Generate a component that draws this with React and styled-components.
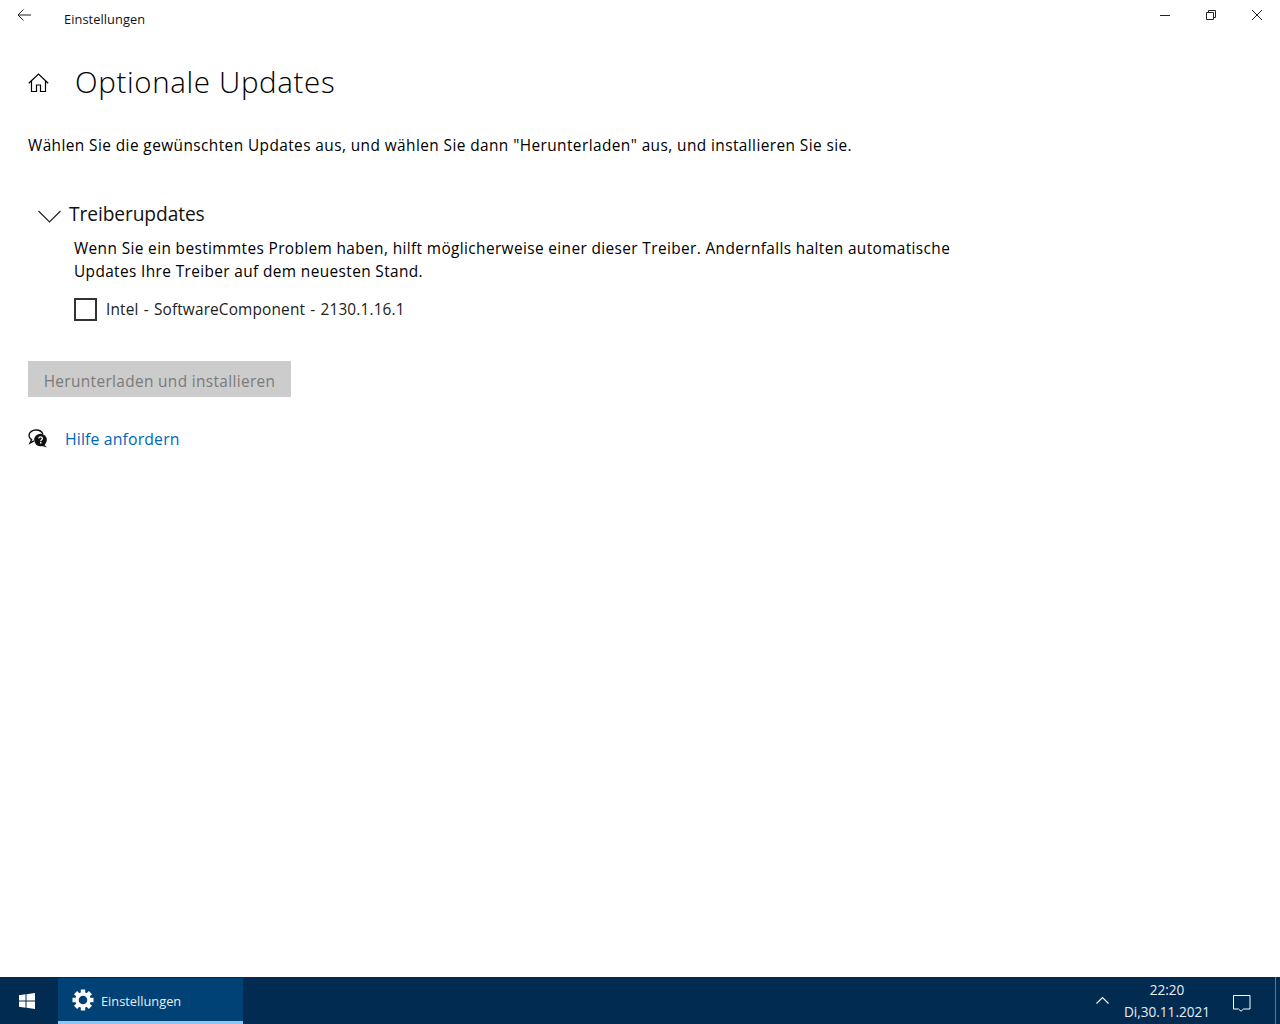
import React from "react";
import styled, { createGlobalStyle } from "styled-components";

const Global = createGlobalStyle`
  html, body { margin: 0; padding: 0; background: #fff; }
  body { font-family: "Open Sans", "Noto Sans", "Liberation Sans", sans-serif; color: #000; }
  #root { height: 1024px; overflow: hidden; }
`;

const Screen = styled.div`
  width: 1280px; height: 1024px; display: flex; flex-direction: column; overflow: hidden;
`;
const Window = styled.div`
  flex: 1; display: flex; flex-direction: column; background: #fff; min-height: 0;
`;
const TitleBar = styled.div`
  height: 32px; flex: none; display: flex; align-items: flex-start;
`;
const BackButton = styled.div`
  width: 48px; height: 30px; flex: none; display: flex; justify-content: center; padding-top: 9px; box-sizing: border-box;
`;
const AppName = styled.div`
  font-size: 12.8px; line-height: 16px; padding: 11px 0 0 16px; flex: 1; color: #111; letter-spacing: 0.07px;
`;
const WinControls = styled.div`
  display: flex;
`;
const WinButton = styled.div`
  width: 46px; height: 30px; display: flex; align-items: center; justify-content: center;
`;
const Content = styled.div`
  padding: 0 0 0 28px; display: flex; flex-direction: column; align-items: flex-start;
`;
const Header = styled.div`
  display: flex; align-items: center; margin-top: 21px; height: 58px;
`;
const HomeIcon = styled.div`
  width: 47px; flex: none; display: flex; align-items: center; padding-top: 2px;
`;
const PageTitle = styled.h1`
  margin: 0; font-weight: 300; font-size: 29.5px; line-height: 40px; letter-spacing: 0.65px; color: #000;
`;
const Intro = styled.p`
  margin: 23px 0 0; font-size: 15.4px; line-height: 24px; letter-spacing: 0.42px; color: #000;
`;
const SectionHead = styled.div`
  display: flex; align-items: center; margin: 41px 0 0 10px; height: 30px;
`;
const Chevron = styled.div`
  width: 31px; flex: none; display: flex; align-items: center; padding-top: 4px;
`;
const SectionTitle = styled.h2`
  margin: 0; font-weight: 400; font-size: 19.2px; line-height: 30px; letter-spacing: -0.1px; color: #111;
`;
const Body = styled.div`
  margin: 8px 0 0 46px; width: 890px;
`;
const Para = styled.p`
  margin: 0; font-size: 15.4px; line-height: 23px; letter-spacing: 0.38px;
`;
const CheckRow = styled.div`
  display: flex; align-items: center; margin-top: 15px; height: 23px;
`;
const CheckBox = styled.div`
  width: 23px; height: 23px; margin-top: -1px; box-sizing: border-box; border: 2px solid #333; background: #fff; flex: none;
`;
const CheckLabel = styled.span`
  margin-left: 9px; font-size: 15.4px; line-height: 23px; letter-spacing: 0.15px; word-spacing: 1px; color: #222;
`;
const DisabledButton = styled.div`
  margin-top: 40px; width: 263px; height: 36px; background: #ccc; color: #7a7a7a;
  font-size: 15.4px; letter-spacing: 0.35px; display: flex; align-items: center; justify-content: center; padding-top: 4px; box-sizing: border-box;
`;
const HelpRow = styled.div`
  display: flex; align-items: center; margin-top: 29px; height: 26px;
`;
const HelpIcon = styled.div`
  width: 37px; flex: none; display: flex; align-items: center; margin-top: -2px;
`;
const HelpLink = styled.a`
  color: #0067b8; font-size: 15.8px; letter-spacing: 0.15px; line-height: 26px; text-decoration: none;
`;
const Taskbar = styled.div`
  height: 47px; flex: none; background: #012b50; color: #fff; display: flex; align-items: stretch;
`;
const StartBtn = styled.div`
  width: 58px; flex: none; display: flex; align-items: center; justify-content: center; padding-right: 4px; box-sizing: border-box;
`;
const TaskApp = styled.div`
  width: 185px; flex: none; background: #004275; border-bottom: 3px solid #8ec5ee; box-sizing: border-box;
  display: flex; align-items: center; padding: 0 0 0 14px; margin-top: 1px; height: 46px;
`;
const TaskLabel = styled.span`
  margin-left: 7px; font-size: 12.8px; color: #e6eef5; padding-top: 3px;
`;
const Spacer = styled.div`flex: 1;`;
const Tray = styled.div`
  display: flex; align-items: center; flex: none;
`;
const TrayUp = styled.div`
  width: 14px; display: flex; margin-right: 13px; margin-top: -2px;
`;
const Clock = styled.div`
  width: 88px; text-align: center; font-size: 13.6px; line-height: 22px; color: #e6eef5; padding-top: 1px;
`;
const Notify = styled.div`
  width: 64px; box-sizing: border-box; display: flex; padding-left: 21px; padding-top: 3px;
`;
const ShowDesktop = styled.div`
  width: 1px; margin-right: 4px; background: #5c7a94;
`;

const gearTeeth = [0, 45, 90, 135, 180, 225, 270, 315];

export default function App() {
  return (
    <Screen>
      <Global />
      <Window>
        <TitleBar>
          <BackButton>
            <svg width="14" height="12" viewBox="0 0 14 12" fill="none" stroke="#222" strokeWidth="1">
              <path d="M14 6H1M6.500 .5 1 6l5.500 5.500" />
            </svg>
          </BackButton>
          <AppName>Einstellungen</AppName>
          <WinControls>
            <WinButton>
              <svg width="10" height="10" viewBox="0 0 10 10" fill="none" stroke="#222"><path d="M0 5.500h10" /></svg>
            </WinButton>
            <WinButton>
              <svg width="10" height="10" viewBox="0 0 10 10" fill="none" stroke="#222"><path d="M.5 2.500h7v7h-7zM2.500 2.500v-2h7v7h-2" /></svg>
            </WinButton>
            <WinButton>
              <svg width="10" height="10" viewBox="0 0 10 10" fill="none" stroke="#222"><path d="M0 0l10 10M10 0 0 10" /></svg>
            </WinButton>
          </WinControls>
        </TitleBar>
        <Content>
          <Header>
            <HomeIcon>
              <svg width="21" height="20" viewBox="0 0 21 20" fill="none" stroke="#000" strokeWidth="1.200">
                <path d="M.8 10.200 10.500 1l9.700 9.200M3.500 8v10.500h5v-6.500h4v6.500h5V8" />
              </svg>
            </HomeIcon>
            <PageTitle>Optionale Updates</PageTitle>
          </Header>
          <Intro>Wählen Sie die gewünschten Updates aus, und wählen Sie dann "Herunterladen" aus, und installieren Sie sie.</Intro>
          <SectionHead>
            <Chevron>
              <svg width="23" height="13" viewBox="0 0 23 13" fill="none" stroke="#222" strokeWidth="1.200">
                <path d="M.5 1 11.500 12 22.500 1" />
              </svg>
            </Chevron>
            <SectionTitle>Treiberupdates</SectionTitle>
          </SectionHead>
          <Body>
            <Para>Wenn Sie ein bestimmtes Problem haben, hilft möglicherweise einer dieser Treiber. Andernfalls halten automatische Updates Ihre Treiber auf dem neuesten Stand.</Para>
            <CheckRow>
              <CheckBox />
              <CheckLabel>Intel - SoftwareComponent - 2130.1.16.1</CheckLabel>
            </CheckRow>
          </Body>
          <DisabledButton>Herunterladen und installieren</DisabledButton>
          <HelpRow>
            <HelpIcon>
              <svg width="20" height="19" viewBox="0 0 20 19">
                <path d="M8 1C4 1 1 3.500 1 6.500c0 1.700 1 3.200 2.500 4.200L2 14l4-2.200" fill="none" stroke="#111" strokeWidth="1.400" />
                <path d="M8 1c3.500 0 6 1.800 6.800 4" fill="none" stroke="#111" strokeWidth="1.400" />
                <circle cx="12.500" cy="11" r="6.300" fill="#111" />
                <path d="M16 15.500 19 18.500 14 17z" fill="#111" />
                <path d="M10.700 9.300c.2-1 1-1.500 1.900-1.500 1 0 1.800.7 1.800 1.600 0 1.300-1.700 1.400-1.700 2.800" fill="none" stroke="#fff" strokeWidth="1.300" />
                <rect x="12" y="13" width="1.500" height="1.500" fill="#fff" />
              </svg>
            </HelpIcon>
            <HelpLink href="#">Hilfe anfordern</HelpLink>
          </HelpRow>
        </Content>
      </Window>
      <Taskbar>
        <StartBtn>
          <svg width="16" height="16" viewBox="0 0 16 16" fill="#fff">
            <path d="M0 2.300 6.500 1.300v6.300H0zM7.500 1.200 16 0v7.600H7.500zM0 8.500h6.500v6.300L0 13.800zM7.500 8.500H16V16l-8.500-1.200z" />
          </svg>
        </StartBtn>
        <TaskApp>
          <svg width="22" height="22" viewBox="0 0 22 22">
            {gearTeeth.map((a) => (
              <rect key={a} x="8.800" y="0.500" width="4.400" height="5" fill="#fff" transform={`rotate(${a} 11 11)`} />
            ))}
            <circle cx="11" cy="11" r="6" fill="none" stroke="#fff" strokeWidth="3.400" />
          </svg>
          <TaskLabel>Einstellungen</TaskLabel>
        </TaskApp>
        <Spacer />
        <Tray>
          <TrayUp>
            <svg width="13" height="8" viewBox="0 0 13 8" fill="none" stroke="#fff" strokeWidth="1.200"><path d="M.5 7.500 6.500 1.500l6 6" /></svg>
          </TrayUp>
          <Clock>22:20<br />Di,30.11.2021</Clock>
          <Notify>
            <svg width="19" height="19" viewBox="0 0 19 19" fill="none" stroke="#fff"><path d="M1.500 2.500h16.500v13.500H11.500L9 18.200 6.500 16H1.500z" /></svg>
          </Notify>
        </Tray>
        <ShowDesktop />
      </Taskbar>
    </Screen>
  );
}
